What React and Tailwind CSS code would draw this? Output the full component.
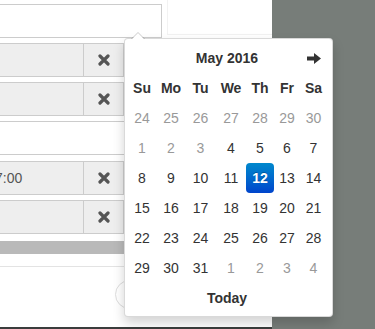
import React from "react";

const font = { fontFamily: '"Liberation Sans", Arial, sans-serif' };

function XIcon() {
  return (
    <svg width="12" height="12" viewBox="0 0 12 12">
      <path d="M2 2 L10 10 M10 2 L2 10" stroke="#555" strokeWidth="3.2" strokeLinecap="round" />
    </svg>
  );
}

function ArrowRight() {
  return (
    <svg width="14" height="11" viewBox="0 0 14 11">
      <path d="M0 3.5 H7 V0 L14 5.5 L7 11 V7.5 H0 Z" fill="#333" />
    </svg>
  );
}

function Row({ children, className = "" }) {
  return (
    <div className={"flex h-[34px] " + className}>
      <div className="w-[84px] h-full bg-[#eeeeee] border border-l-0 border-[#cccccc] overflow-hidden flex items-center text-[14px] text-[#555]">
        {children}
      </div>
      <div className="w-[40px] h-full bg-[#eeeeee] border border-l-0 border-[#cccccc] flex items-center justify-center">
        <XIcon />
      </div>
    </div>
  );
}

const weeks = [
  [[24, 0], [25, 0], [26, 0], [27, 0], [28, 0], [29, 0], [30, 0]],
  [[1, 0], [2, 0], [3, 0], [4, 1], [5, 1], [6, 1], [7, 1]],
  [[8, 1], [9, 1], [10, 1], [11, 1], [12, 2], [13, 1], [14, 1]],
  [[15, 1], [16, 1], [17, 1], [18, 1], [19, 1], [20, 1], [21, 1]],
  [[22, 1], [23, 1], [24, 1], [25, 1], [26, 1], [27, 1], [28, 1]],
  [[29, 1], [30, 1], [31, 1], [1, 0], [2, 0], [3, 0], [4, 0]],
];

const cols = "grid grid-cols-[30px_28px_31px_30px_28px_26px_27px]";

export default function App() {
  return (
    <div className="w-[375px] h-[329px] flex overflow-hidden relative" style={font}>
      <div className="w-[272px] h-full bg-white flex flex-col">
        <div className="flex h-[38px]">
          <div className="w-[162px] h-[34px] mt-[4px] border border-l-0 border-[#cccccc]" />
          <div className="ml-[5px] flex-1 h-[35px] border-l border-b border-[#f2f2f2]" />
        </div>
        <Row className="mt-[5px]" />
        <Row className="mt-[5px]" />
        <div className="mt-[5px] h-[34px] w-[200px] border border-l-0 border-[#cccccc]" />
        <Row className="mt-[6px]">
          <span className="-ml-[5px]">7:00</span>
        </Row>
        <Row className="mt-[5px]" />
        <div className="mt-[7px] h-[13px] bg-[#b9b9b9]" />
        <div className="mt-[12px] h-px bg-[#e3e3e3]" />
        <div className="mt-[13px] ml-[115px] w-[30px] h-[29px] rounded-full border border-[#dddddd]" />
        <div className="flex-1" />
        <div className="h-[2px] bg-[#3a3d3c]" />
      </div>
      <div className="flex-1 h-full bg-[#777d79]" />

      <div className="absolute left-[124px] top-[38px] w-[209px] bg-white border border-black/15 rounded-[4px] shadow-[0_6px_12px_rgba(0,0,0,0.175)] pl-[2px] pr-[5px] pt-[4px] pb-[3px] text-[14px] text-[#333]">
        <div className="absolute -top-[7px] left-[6px] w-0 h-0 border-x-[7px] border-x-transparent border-b-[7px] border-b-black/20" />
        <div className="absolute -top-[6px] left-[7px] w-0 h-0 border-x-[6px] border-x-transparent border-b-[6px] border-b-white" />
        <div className="flex h-[30px] items-center">
          <div className="w-[27px]" />
          <div className="flex-1 text-center font-bold">May 2016</div>
          <div className="w-[27px] flex justify-center">
            <ArrowRight />
          </div>
        </div>
        <div className={cols + " h-[30px] font-bold"}>
          {["Su", "Mo", "Tu", "We", "Th", "Fr", "Sa"].map((d) => (
            <div key={d} className="flex items-center justify-center">{d}</div>
          ))}
        </div>
        {weeks.map((w, i) => (
          <div key={i} className={cols + " h-[30px]"}>
            {w.map(([n, t], j) => (
              <div key={j} className="flex items-center justify-center">
                {t === 2 ? (
                  <div className="w-full h-full rounded-[4px] bg-gradient-to-b from-[#0088cc] to-[#0044cc] text-white font-bold flex items-center justify-center [text-shadow:0_-1px_0_rgba(0,0,0,0.25)]">
                    {n}
                  </div>
                ) : (
                  <span className={t === 0 ? "text-[#999999]" : "text-[#333333]"}>{n}</span>
                )}
              </div>
            ))}
          </div>
        ))}
        <div className="h-[30px] flex items-center justify-center font-bold">Today</div>
      </div>
    </div>
  );
}
